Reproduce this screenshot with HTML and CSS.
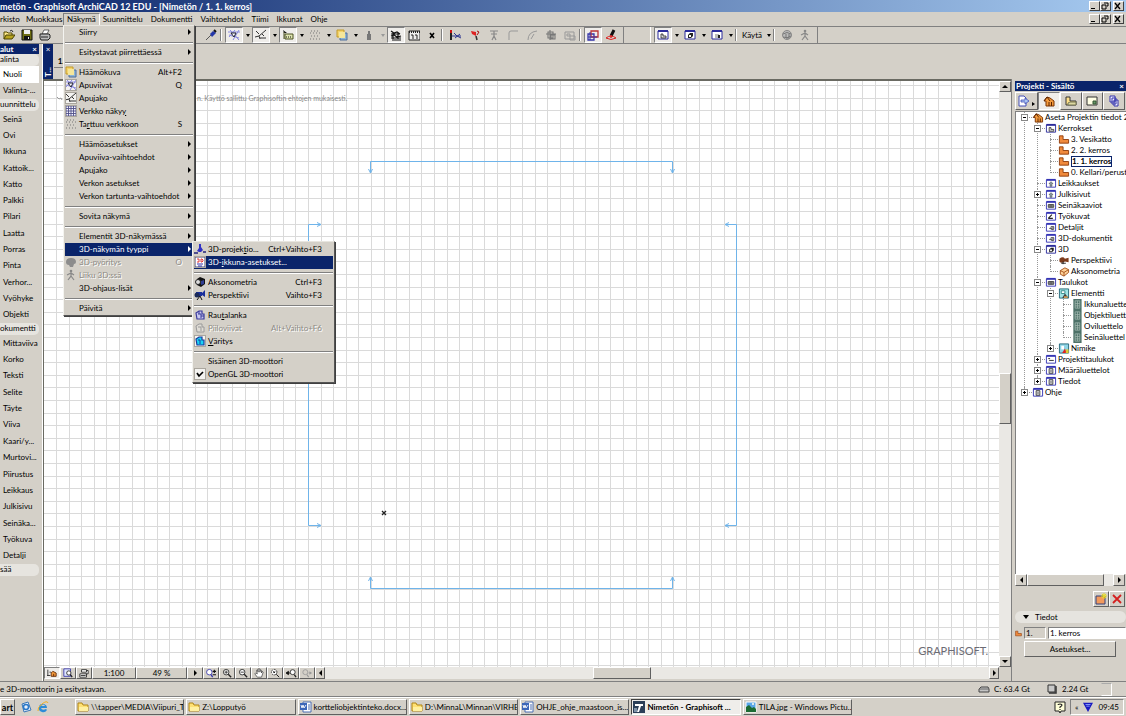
FILE: index.html
```html
<!DOCTYPE html>
<html lang="fi">
<head>
    <meta charset="UTF-8" />
    <title>Nimetön - Graphisoft ArchiCAD 12 EDU</title>
    <link rel="stylesheet" href="styles.css">
</head>
<body>
    <!-- Shared icons -->
    <svg class="sprite" aria-hidden="true">
        <symbol id="open" viewBox="0 0 12 12"><path d="M1 10V3h3l1 1h4v2" fill="#ffe98a" stroke="#554a00"/><path d="M1 10l2-4h9l-3 4z" fill="#b9a520" stroke="#4a4200"/><path d="M7 2q2-2 3 1" fill="none" stroke="#222"/></symbol>
        <symbol id="save" viewBox="0 0 12 12"><path d="M1 1h10v10H1z" fill="#6c6c10" stroke="#111"/><path d="M3 1h6v4H3z" fill="#eee"/><path d="M3 7h6v4H3z" fill="#111"/><path d="M7 8h1v2H7z" fill="#eee"/></symbol>
        <symbol id="print" viewBox="0 0 12 12"><path d="M3 5l2-4h5L8 5z" fill="#fff" stroke="#333" stroke-width=".7"/><path d="M1 5h9l1 1v3l-2 2H2L1 9z" fill="#bbb" stroke="#222"/><path d="M2 8h7" stroke="#222"/></symbol>
        <symbol id="pen" viewBox="0 0 12 12"><path d="M1 11l5-5" stroke="#555"/><path d="M5 5l3-3 3 2-4 4z" fill="#2437a8"/><path d="M9 1l2 2" stroke="#111" stroke-width="2"/></symbol>
        <symbol id="guide" viewBox="0 0 12 12"><path d="M0 3h12M2 1l9 10M11 1L5 11M1 6l10 3M1 8l6-7" stroke="#8a8ae0" fill="none"/><path d="M3 4h5L6 8z" fill="#fff" stroke="#223"/></symbol>
        <symbol id="split" viewBox="0 0 12 12"><path d="M0 8l4-1 7-6M1 2l3 3M5 9h6M7 5l2 2M4 7l1 3" fill="none" stroke="#333"/></symbol>
        <symbol id="coord" viewBox="0 0 12 12"><path d="M1 1l4 3H2z" fill="#111"/><path d="M2 3v7M3 5h8v5H3z" fill="#dfe5b0" stroke="#4a5020"/><path d="M4 8h6" stroke="#111" stroke-dasharray="1 1"/></symbol>
        <symbol id="dots" viewBox="0 0 12 12"><path d="M2 2h9M1 4h10M2 7h9M1 10h10" stroke="#777" stroke-dasharray="1 2"/></symbol>
        <symbol id="ghost" viewBox="0 0 12 12"><path d="M1 1h7v7H1z" fill="#f4d36a" stroke="#c29a28"/><path d="M4 4h7v7H4z" fill="#8eb4d4" stroke="#4e6f9c"/><path d="M3 3h6v6H3z" fill="#f5e69a"/></symbol>
        <symbol id="weight" viewBox="0 0 12 12"><path d="M4 5h4v6H4zM5 2h2v3H5z" fill="#777"/></symbol>
        <symbol id="trace" viewBox="0 0 12 12"><path d="M1 2l3 2 3-1 3 2M1 5h9M1 7l3-1 3 2 4-1M1 9h10M2 11h9M3 3v7M8 4v6" fill="none" stroke="#111" stroke-width="1.2"/></symbol>
        <symbol id="film" viewBox="0 0 12 12"><path d="M1 2h11v9H1z" fill="#eee" stroke="#222"/><path d="M1 3h11" stroke="#222" stroke-dasharray="1 1" stroke-width="2"/><path d="M3 6h2v4M7 6h2v4" fill="none" stroke="#222"/></symbol>
        <symbol id="cross" viewBox="0 0 12 12"><path d="M4 4l4 5M8 4L4 9" stroke="#000" stroke-width="1.6"/></symbol>
        <symbol id="cut" viewBox="0 0 12 12"><path d="M1 1v3" stroke="#c11" stroke-width="2"/><path d="M1 4v7" stroke="#222" stroke-width="2"/><path d="M2 7h9M4 4l3 3 4 2M5 9l5-4" fill="none" stroke="#2c3590"/></symbol>
        <symbol id="hammer" viewBox="0 0 12 12"><path d="M2 2l5 1v4L3 5z" fill="#d22"/><path d="M8 2l2 1-2 3" stroke="#a11" fill="none"/><path d="M7 7l1 4" stroke="#333" stroke-width="1.5"/></symbol>
        <symbol id="align" viewBox="0 0 12 12"><path d="M2 2h8M6 2v5M3 5h6M4 11l2-4 2 4" fill="none" stroke="#888" stroke-width="1.2"/></symbol>
        <symbol id="corner" viewBox="0 0 12 12"><path d="M2 11V4q0-2 2-2h7" fill="none" stroke="#999"/></symbol>
        <symbol id="arc" viewBox="0 0 12 12"><path d="M2 11q0-8 9-9M5 10l3-5" fill="none" stroke="#999"/></symbol>
        <symbol id="group" viewBox="0 0 12 12"><path d="M3 3h5v6H3zM5 1v10M1 5h10M6 6h4v4H6z" fill="none" stroke="#777" stroke-width="1.1"/></symbol>
        <symbol id="ungroup" viewBox="0 0 12 12"><path d="M1 3h9v7H1zM3 5h3v2H3zM6 7h5v4H6z" fill="none" stroke="#999"/></symbol>
        <symbol id="suspend" viewBox="0 0 12 12"><path d="M1 5h6v6H1z" fill="none" stroke="#3535a8" stroke-width="1.3"/><path d="M4 2h7v6H4z" fill="none" stroke="#b33" stroke-width="1.3"/><path d="M3 3v8M1 8h9" stroke="#3535a8"/></symbol>
        <symbol id="magic" viewBox="0 0 12 12"><path d="M9 1L6 7" stroke="#111" stroke-width="3"/><path d="M1 9q5-4 10 0-5 3-10 0z" fill="none" stroke="#d22"/><path d="M6 6v3" stroke="#d22" stroke-width="1.5"/></symbol>
        <symbol id="win" viewBox="0 0 12 12"><path d="M1 2h10v8H1z" fill="#fff" stroke="#2b2b9b"/><path d="M1 2h10" stroke="#2b2b9b" stroke-width="2"/><path d="M4 9V5h2v2h3v2z" fill="#ddd" stroke="#222" stroke-width=".8"/></symbol>
        <symbol id="win3d" viewBox="0 0 12 12"><path d="M1 2h10v8H1z" fill="#fff" stroke="#2b2b9b"/><path d="M1 2h10" stroke="#2b2b9b" stroke-width="2"/><path d="M4 6l2-2h3v3L7 9H4z" fill="#222"/><path d="M5 6h2v2H5z" fill="#fff"/></symbol>
        <symbol id="winlay" viewBox="0 0 12 12"><path d="M1 2h10v8H1z" fill="#fff" stroke="#2b2b9b"/><path d="M1 2h10" stroke="#2b2b9b" stroke-width="2"/><path d="M4 5h4v4H4z" fill="#bbb"/><path d="M7 6h2v3H7z" fill="#222"/></symbol>
        <symbol id="winstar" viewBox="0 0 12 12"><path d="M1 2h10v8H1z" fill="#fff" stroke="#3434b4"/><path d="M1 2h10" stroke="#3434b4" stroke-width="2"/><path d="M6 4l2 2H7v3H5V6H4z" fill="#9ab" stroke="#333" stroke-width=".6"/></symbol>
        <symbol id="wintab" viewBox="0 0 12 12"><path d="M1 2h10v8H1z" fill="#fff" stroke="#3434b4"/><path d="M1 2h10" stroke="#3434b4" stroke-width="2"/><path d="M3 5h6v3H3zM5 5v3M7 5v3" fill="#aaa" stroke="#222" stroke-width=".8"/></symbol>
        <symbol id="winpage" viewBox="0 0 12 12"><path d="M1 2h10v8H1z" fill="#fff" stroke="#3434b4"/><path d="M1 2h10" stroke="#3434b4" stroke-width="2"/><path d="M4 4h4v5H4zM6 5v3" fill="none" stroke="#222" stroke-width=".9"/></symbol>
        <symbol id="winpen" viewBox="0 0 12 12"><path d="M1 2h10v8H1z" fill="#fff" stroke="#3434b4"/><path d="M1 2h10" stroke="#3434b4" stroke-width="2"/><path d="M3 8l4-4M3 8h5" stroke="#222" stroke-width="1.2"/></symbol>
        <symbol id="windet" viewBox="0 0 12 12"><path d="M1 2h10v8H1z" fill="#fff" stroke="#3434b4"/><path d="M1 2h10" stroke="#3434b4" stroke-width="2"/><path d="M8 5v4M4 7h3M6 5h3v3H6z" stroke="#333" fill="none" stroke-width=".8"/></symbol>
        <symbol id="winlist" viewBox="0 0 12 12"><path d="M1 2h10v8H1z" fill="#fff" stroke="#3434b4"/><path d="M1 2h10" stroke="#3434b4" stroke-width="2"/><path d="M3 5h2M4 7h5" stroke="#222"/></symbol>
        <symbol id="orbit" viewBox="0 0 12 12"><path d="M1 6q0-4 5-4t5 4q0 2-2 2l-1 3H5L4 9Q1 9 1 6z" fill="#8c8c8c"/></symbol>
        <symbol id="globe" viewBox="0 0 12 12"><circle cx="6" cy="6" r="4.5" fill="#bbb" stroke="#888"/><path d="M2 5q4-3 8 0M2 8q4 2 8-1M5 5v4h3V5" fill="none" stroke="#777"/></symbol>
        <symbol id="walk" viewBox="0 0 12 12"><circle cx="6" cy="2" r="1.3" fill="#888"/><path d="M6 3v4l-3 4M6 7l3 4M2 6l4-2 3 2" fill="none" stroke="#888" stroke-width="1.2"/></symbol>
        <symbol id="grid" viewBox="0 0 12 12"><path d="M0 0h12v12H0z" fill="#f4f4ff"/><path d="M1 0v12M3.500 0v12M6 0v12M8.500 0v12M11 0v12M0 1h12M0 3.500h12M0 6h12M0 8.500h12M0 11h12" stroke="#4e4e88" stroke-width=".9"/></symbol>
        <symbol id="proj" viewBox="0 0 12 12"><path d="M5 1h2v3l2 3-2 2H5L3 8l2-3z" fill="#3131c4"/><path d="M0 10h4M9 9h3" stroke="#22227a" stroke-width="1.6"/></symbol>
        <symbol id="set3d" viewBox="0 0 12 12"><path d="M1 1h10v10H1z" fill="#fff" stroke="#447"/><path d="M3 3h2v3H3M7 3h1l1 1v1L8 6H7z" fill="none" stroke="#d22" stroke-width=".9"/><path d="M3 8h6M4 10h4" stroke="#33a"/></symbol>
        <symbol id="axo" viewBox="0 0 12 12"><path d="M3 3l3-2 5 2v5l-4 3-4-2z" fill="#111"/><circle cx="4" cy="6" r="2.500" fill="#ddd" stroke="#222"/><path d="M7 5l3-1v4L7 9z" fill="#2f3d94"/></symbol>
        <symbol id="camera" viewBox="0 0 12 12"><path d="M2 3h6v4H2zM8 4l3-3v7L8 6z" fill="#1a2f9c"/><circle cx="3" cy="6" r="2.500" fill="#1b2a58"/><path d="M6 7l-3 4M6 7l2 4" stroke="#111"/></symbol>
        <symbol id="wire" viewBox="0 0 12 12"><path d="M2 4l3-2h3v3h2v5H3z" fill="#c8c8ee" stroke="#3a3a9c" stroke-width="1.2"/><path d="M4 5h3v4M7 7h3M5 2v3" fill="none" stroke="#3a3a9c"/></symbol>
        <symbol id="hidden" viewBox="0 0 12 12"><path d="M2 4l3-2h3v3h2v5H3zM4 5h3v4" fill="#e0ddd6" stroke="#999"/></symbol>
        <symbol id="shade" viewBox="0 0 12 12"><path d="M2 4l3-2h3v3h2v5H3z" fill="#19d3f5" stroke="#1b3a9c" stroke-width="1.2"/><path d="M4 5h2v4" fill="none" stroke="#1b3a9c"/></symbol>
        <symbol id="check" viewBox="0 0 12 12"><path d="M3 5l2 3 4-4" fill="none" stroke="#000" stroke-width="1.7"/></symbol>
        <symbol id="house" viewBox="0 0 12 12"><path d="M1 6l3-4 3 1 4 3v5H3V6z" fill="#f39a3c" stroke="#7a3200"/><path d="M6 7v4M8.500 7v4M1 6l3-4 3 4" stroke="#5a2200" fill="none"/></symbol>
        <symbol id="storey" viewBox="0 0 12 12"><path d="M1 2h4v4h6v4H1z" fill="#f08a3c" stroke="#8e3c0c"/></symbol>
        <symbol id="viewmap" viewBox="0 0 12 12"><path d="M1 2h4v4h6v4H1z" fill="#ffe08a" stroke="#333"/><path d="M5 7h6v3H3V8z" fill="#dcd8a0" stroke="#775"/></symbol>
        <symbol id="layout" viewBox="0 0 12 12"><path d="M1 2h10v8H1z" fill="#ffffe4" stroke="#333"/><path d="M7 6h3v3H7z" fill="#696" stroke="#353"/></symbol>
        <symbol id="pubset" viewBox="0 0 12 12"><path d="M2 1h5v6H2zM4 3h4v6H4zM6 5h4v6H6z" fill="#eef" stroke="#33a"/></symbol>
        <symbol id="chooser" viewBox="0 0 12 12"><path d="M1 1h5l2 2v8H1z" fill="#fff" stroke="#4450b8"/><path d="M3 5h4V3l4 3-4 3V7H3z" fill="#a9c4f4" stroke="#4450b8" stroke-width=".8"/></symbol>
        <symbol id="movie" viewBox="0 0 12 12"><path d="M1 4q4-3 6 0l4-1v5L7 7q-4 3-6 0z" fill="#7c3b1c"/><path d="M3 9h5M5 7v3" stroke="#222"/></symbol>
        <symbol id="axobox" viewBox="0 0 12 12"><path d="M2 5l5-3 4 2v3l-5 4-4-2z" fill="#ffd39a" stroke="#a4511a"/><path d="M2 5l4 2 5-3M6 7v4" fill="none" stroke="#a4511a"/></symbol>
        <symbol id="element" viewBox="0 0 12 12"><path d="M1 1h10v10H1z" fill="#9fe4e6" stroke="#267"/><path d="M3 3h4v3H3z" fill="#fff" stroke="#388"/><path d="M4 11l3-5 4 5z" fill="#444"/><path d="M6 9h4v2H6z" fill="#c95"/></symbol>
        <symbol id="component" viewBox="0 0 12 12"><path d="M1 1h10v10H1z" fill="#8fd4e6" stroke="#267"/><path d="M3 3h3v4H3z" fill="#fff"/><path d="M4 11l3-5 2 5z" fill="#d22"/><path d="M8 7h3v4H8z" fill="#dc3"/></symbol>
        <symbol id="sched" viewBox="0 0 12 12"><path d="M2 0h9v12H2z" fill="#4d7168"/><path d="M4 2h5v8H4zM4 5h5M4 7.500h5M6.500 2v8" fill="none" stroke="#a7bcb4" stroke-width=".8"/></symbol>
        <symbol id="magfit" viewBox="0 0 12 12"><circle cx="5" cy="5" r="3.300" fill="#fff" stroke="#222" stroke-dasharray="2 1"/><path d="M7.500 7.500L11 11M4 4l2 2M6 4L4 6" stroke="#222" stroke-width="1.200"/></symbol>
        <symbol id="magplus" viewBox="0 0 12 12"><circle cx="5" cy="5" r="3.300" fill="#fff" stroke="#222"/><path d="M7.500 7.500L11 11" stroke="#222" stroke-width="1.600"/><path d="M3 5h4M5 3v4" stroke="#222"/></symbol>
        <symbol id="magminus" viewBox="0 0 12 12"><circle cx="5" cy="5" r="3.300" fill="#fff" stroke="#222"/><path d="M7.500 7.500L11 11" stroke="#222" stroke-width="1.600"/><path d="M3 5h4" stroke="#222"/></symbol>
        <symbol id="magpm" viewBox="0 0 12 12"><circle cx="4" cy="5" r="3.300" fill="#fff" stroke="#33a"/><path d="M6 8l2 3" stroke="#33a" stroke-width="1.600"/><path d="M8 4h4M10 2v4M8 8h4" stroke="#111" stroke-width="1.300"/></symbol>
        <symbol id="magprev" viewBox="0 0 12 12"><circle cx="8" cy="5" r="3" fill="#fff" stroke="#222"/><path d="M10 8l2 3" stroke="#222" stroke-width="1.600"/><path d="M0 6l3-2v4zM2 6h3" stroke="#111" fill="#111"/></symbol>
        <symbol id="magnext" viewBox="0 0 12 12"><circle cx="4" cy="5" r="3" fill="none" stroke="#999"/><path d="M6 8l2 3M8 6h3" stroke="#999" stroke-width="1.400"/><path d="M12 6L9 4v4z" fill="#999"/></symbol>
        <symbol id="hand" viewBox="0 0 12 12"><path d="M4 11L1 7l1-1 2 1-1-4 1-1 1 3V1h2v4l1-3 1 1v3l1-2 1 1-2 6z" fill="#fff" stroke="#333" stroke-width=".8"/></symbol>
        <symbol id="nav" viewBox="0 0 12 12"><path d="M1 2v7M0 9h4M3 5h2" stroke="#222"/><path d="M5 6l2-2 4 2v4H5z" fill="#f39a3c" stroke="#5a2200"/><path d="M8 7v3" stroke="#5a2200"/></symbol>
        <symbol id="magpage" viewBox="0 0 12 12"><path d="M1 1h8v9H1z" fill="#dfe6ff" stroke="#33a"/><circle cx="7" cy="6" r="2.600" fill="#fff" stroke="#222"/><path d="M9 8l2 3" stroke="#222" stroke-width="1.500"/></symbol>
        <symbol id="orient" viewBox="0 0 12 12"><path d="M3 2h6v3H3zM1 7h8v4H1zM9 3h2v4H8" fill="#fff" stroke="#222"/><path d="M2 9h6" stroke="#222"/></symbol>
        <symbol id="newstorey" viewBox="0 0 12 12"><path d="M1 3h9v8H1z" fill="#f39a5c" stroke="#33407c"/><path d="M9 0v6M6 3h6M7 1l4 4M11 1L7 5" stroke="#e6dc20"/></symbol>
        <symbol id="delete" viewBox="0 0 12 12"><path d="M2 2l8 8M10 2L2 10" stroke="#d42020" stroke-width="1.800"/></symbol>
        <symbol id="drive" viewBox="0 0 12 12"><path d="M1 6l2-2h7l1 2v3H1z" fill="#c4c4c4" stroke="#444"/><path d="M1 6h10" stroke="#666"/></symbol>
        <symbol id="chip" viewBox="0 0 12 12"><path d="M2 2h7v7H2z" fill="#c8c8c8" stroke="#333"/><path d="M3 10h7V3" fill="none" stroke="#333" stroke-width="1.500"/></symbol>
        <symbol id="folder" viewBox="0 0 12 12"><path d="M1 2h4l1 2h5v6H1z" fill="#ffe173" stroke="#b08414"/><path d="M2 6h9v4H2z" fill="#fff0a0"/></symbol>
        <symbol id="word" viewBox="0 0 12 12"><path d="M3 1h8v10H3z" fill="#fff" stroke="#4a6cb0"/><path d="M0 2h7v7H0z" fill="#3c66b8"/><path d="M1 4l1 3 1-3 1 3 2-3" fill="none" stroke="#fff" stroke-width=".9"/><path d="M8 4h2M8 6h2M8 8h2" stroke="#4a6cb0"/></symbol>
        <symbol id="archicad" viewBox="0 0 12 12"><path d="M0 0h12v12H0z" fill="#2b3f58"/><path d="M2 3h8v2H8L6 11H4l2-6H2z" fill="#fff"/><path d="M1 7h3v4H1z" fill="#7f93a8"/></symbol>
        <symbol id="photo" viewBox="0 0 12 12"><path d="M1 1h10v10H1z" fill="#5aa6e8" stroke="#fff"/><path d="M1 11V6l3-2 3 3 2-1 2 2v3z" fill="#1d6c34"/><circle cx="8" cy="3" r="1" fill="#ffe"/></symbol>
        <symbol id="outlook" viewBox="0 0 12 12"><path d="M2 3l6-2 3 8-7 2z" fill="#e7f0fb" stroke="#3b78b8"/><circle cx="6" cy="6" r="2.500" fill="none" stroke="#2b78c8" stroke-width="1.500"/></symbol>
        <symbol id="ie" viewBox="0 0 12 12"><path d="M10 7H4q1 3 5 1l1 1q-2 3-5 2-4-1-3-5t5-3q3 1 3 4zM4 5h4q-1-2-2-1.500T4 5z" fill="#2b8cd8"/><path d="M1 10q-1-3 4-7t6-1" fill="none" stroke="#f0b020"/></symbol>
        <symbol id="help" viewBox="0 0 12 12"><path d="M1 1h10v9H7l-1 2-1-2H1z" fill="#ffffd8" stroke="#222"/><path d="M4 4q0-1 2-1t2 1-2 2v1M6 8v1" fill="none" stroke="#222" stroke-width="1.200"/></symbol>
        <symbol id="shield" viewBox="0 0 12 12"><path d="M0 1h12L6 12z" fill="#1818c0"/><path d="M3 3h6M4 5h4" stroke="#9ab0ff"/></symbol>
    </svg>

    <header>
        <div class="titlebar">
            <h1>metön - Graphisoft ArchiCAD 12 EDU - [Nimetön / 1. 1. kerros]</h1>
            <div class="controls">
                <button aria-label="Pienennä"><svg viewBox="0 0 8 8"><path d="M1 6h4v1H1z"/></svg></button><button aria-label="Palauta"><svg viewBox="0 0 8 8"><path d="M3 1h4v3H6M1 3h4v4H1z" fill="none" stroke="#000"/></svg></button><button class="close" aria-label="Sulje"><svg viewBox="0 0 8 8"><path d="M1 1l5 6M6 1L1 7" stroke="#000" stroke-width="1.300"/></svg></button>
            </div>
        </div>
        <nav class="menubar">
            <button class="m-file">rkisto</button>
            <button class="m-edit">Muokkaus</button>
            <div class="menu-holder">
                <button class="m-view">Näkymä</button>
                <ul class="menu">
                    <li><button><span></span>Siirry<i></i></button></li>
                    <li class="sep"></li>
                    <li><button><span></span>Esitystavat piirrettäessä<i></i></button></li>
                    <li class="sep"></li>
                    <li><button><svg><use href="#ghost"/></svg>Häämökuva<kbd>Alt+F2</kbd></button></li>
                    <li><button><svg class="on"><use href="#guide"/></svg>Apuviivat<kbd>Q</kbd></button></li>
                    <li><button><svg class="on"><use href="#split"/></svg>Apujako</button></li>
                    <li><button><svg class="on"><use href="#grid"/></svg>Verkko näky<u>y</u></button></li>
                    <li><button><svg><use href="#dots"/></svg>Ta<u>r</u>ttuu verkkoon<kbd>S</kbd></button></li>
                    <li class="sep"></li>
                    <li><button><span></span>Häämöasetukset<i></i></button></li>
                    <li><button><span></span>Apuviiva-vaihtoehdot<i></i></button></li>
                    <li><button><span></span>Apujako<i></i></button></li>
                    <li><button><span></span>Verkon asetukset<i></i></button></li>
                    <li><button><span></span>Verkon tartunta-vaihtoehdot<i></i></button></li>
                    <li class="sep"></li>
                    <li><button><span></span>Sovita näkymä<i></i></button></li>
                    <li class="sep"></li>
                    <li><button><span></span>Elementit 3D-näkymässä<i></i></button></li>
                    <li class="has-sub">
                        <button class="active"><span></span>3D-näkymän tyyppi<i></i></button>
                        <ul class="menu submenu">
                            <li><button><svg><use href="#proj"/></svg>3D-projek<u>t</u>io...<kbd>Ctrl+Vaihto+F3</kbd></button></li>
                            <li><button class="active"><svg class="on"><use href="#set3d"/></svg>3D-<u>i</u>kkuna-asetukset...</button></li>
                            <li class="sep"></li>
                            <li><button><svg><use href="#axo"/></svg>Aksonometria<kbd>Ctrl+F3</kbd></button></li>
                            <li><button><svg><use href="#camera"/></svg>Perspektiivi<kbd>Vaihto+F3</kbd></button></li>
                            <li class="sep"></li>
                            <li><button><svg><use href="#wire"/></svg>Rau<u>t</u>alanka</button></li>
                            <li><button disabled><svg><use href="#hidden"/></svg>Piiloviivat<kbd>Alt+Vaihto+F6</kbd></button></li>
                            <li><button><svg class="on"><use href="#shade"/></svg><u>V</u>äritys</button></li>
                            <li class="sep"></li>
                            <li><button><span></span>Sisäinen 3D-moottori</button></li>
                            <li><button><svg class="on"><use href="#check"/></svg>OpenGL 3D-moottori</button></li>
                        </ul>
                    </li>
                    <li><button disabled><svg><use href="#orbit"/></svg>3D-pyöritys<kbd>O</kbd></button></li>
                    <li><button disabled><svg><use href="#walk"/></svg>Liiku 3D:ssä</button></li>
                    <li><button><span></span>3D-ohjaus-lisät<i></i></button></li>
                    <li class="sep"></li>
                    <li><button><span></span>Päivitä<i></i></button></li>
                </ul>
            </div>
            <button>Suunnittelu</button>
            <button>Dokumentti</button>
            <button>Vaihtoehdot</button>
            <button>Tiimi</button>
            <button>Ikkunat</button>
            <button>Ohje</button>
            <div class="controls">
                <button aria-label="Pienennä ikkuna"><svg viewBox="0 0 8 8"><path d="M1 6h4v1H1z"/></svg></button><button aria-label="Palauta ikkuna"><svg viewBox="0 0 8 8"><path d="M3 1h4v3H6M1 3h4v4H1z" fill="none" stroke="#000"/></svg></button><button class="close" aria-label="Sulje ikkuna"><svg viewBox="0 0 8 8"><path d="M1 1l5 6M6 1L1 7" stroke="#000" stroke-width="1.300"/></svg></button>
            </div>
        </nav>
        <div class="toolbar">
            <div class="file-tools">
                <button aria-label="Avaa"><svg><use href="#open"/></svg></button>
                <button aria-label="Tallenna"><svg><use href="#save"/></svg></button>
                <button aria-label="Tulosta"><svg><use href="#print"/></svg></button>
            </div>
            <div class="tools">
                <button aria-label="Poimi"><svg><use href="#pen"/></svg></button>
                <span class="bar"></span>
                <button class="on" aria-label="Apuviivat"><svg><use href="#guide"/></svg></button><button class="drop" aria-label="Apuviivavalinnat"></button>
                <button class="on" aria-label="Apujako"><svg><use href="#split"/></svg></button><button class="drop" aria-label="Apujakovalinnat"></button>
                <button class="on" aria-label="Koordinaatit"><svg><use href="#coord"/></svg></button><button class="drop" aria-label="Koordinaattivalinnat"></button>
                <button aria-label="Verkko"><svg><use href="#dots"/></svg></button><button class="drop" aria-label="Verkkovalinnat"></button>
                <button aria-label="Häämökuva"><svg><use href="#ghost"/></svg></button><button class="drop" aria-label="Häämövalinnat"></button>
                <button aria-label="Painovoima"><svg><use href="#weight"/></svg></button><button class="drop dim" aria-label="Painovoimavalinnat"></button>
                <button class="on" aria-label="Seuranta"><svg><use href="#trace"/></svg></button>
                <button aria-label="Mitat"><svg><use href="#film"/></svg></button>
                <button aria-label="Poista mitat"><svg><use href="#cross"/></svg></button>
                <span class="bar"></span>
                <button class="wide" aria-label="Leikkaa"><svg><use href="#cut"/></svg></button>
                <button class="wide" aria-label="Katkaise"><svg><use href="#hammer"/></svg></button>
                <button class="wide" aria-label="Tasaa"><svg><use href="#align"/></svg></button>
                <button class="wide" aria-label="Kulma"><svg><use href="#corner"/></svg></button>
                <button class="wide" aria-label="Pyöristä"><svg><use href="#arc"/></svg></button>
                <button class="wide" aria-label="Ryhmitä"><svg><use href="#group"/></svg></button>
                <button class="wide" aria-label="Pura ryhmä"><svg><use href="#ungroup"/></svg></button>
                <span class="bar"></span>
                <button class="on" aria-label="Ryhmälukko"><svg><use href="#suspend"/></svg></button>
                <button aria-label="Taikasauva"><svg><use href="#magic"/></svg></button>
            </div>
            <div class="tools views">
                <button class="on" aria-label="Pohja"><svg><use href="#win"/></svg></button><button class="drop" aria-label="Pohjavalinnat"></button>
                <button aria-label="3D-ikkuna"><svg><use href="#win3d"/></svg></button><button class="drop" aria-label="3D-valinnat"></button>
                <button aria-label="Planssi"><svg><use href="#winlay"/></svg></button><button class="drop" aria-label="Planssivalinnat"></button>
                <span class="bar"></span>
                <button class="label">Käytä</button><button class="drop" aria-label="Käyttövalinnat"></button>
                <span class="bar"></span>
                <button aria-label="Pyöritä"><svg><use href="#globe"/></svg></button>
                <button aria-label="Kävele"><svg><use href="#walk"/></svg></button>
            </div>
        </div>
    </header>

    <main>
        <aside class="toolbox">
            <h2>alut<span>×</span></h2>
            <h3>alinta</h3>
            <ul class="few">
                <li><button class="picked">Nuoli</button></li>
                <li><button>Valinta-...</button></li>
            </ul>
            <h3>uunnittelu</h3>
            <ul class="design">
                <li><button>Seinä</button></li>
                <li><button>Ovi</button></li>
                <li><button>Ikkuna</button></li>
                <li><button>Kattoik...</button></li>
                <li><button>Katto</button></li>
                <li><button>Palkki</button></li>
                <li><button>Pilari</button></li>
                <li><button>Laatta</button></li>
                <li><button>Porras</button></li>
                <li><button>Pinta</button></li>
                <li><button>Verhor...</button></li>
                <li><button>Vyöhyke</button></li>
                <li><button>Objekti</button></li>
            </ul>
            <h3>okumentti</h3>
            <ul class="document">
                <li><button>Mittaviiva</button></li>
                <li><button>Korko</button></li>
                <li><button>Teksti</button></li>
                <li><button>Selite</button></li>
                <li><button>Täyte</button></li>
                <li><button>Viiva</button></li>
                <li><button>Kaari/y...</button></li>
                <li><button>Murtovi...</button></li>
                <li><button>Piirustus</button></li>
                <li><button>Leikkaus</button></li>
                <li><button>Julkisivu</button></li>
                <li><button>Seinäka...</button></li>
                <li><button>Työkuva</button></li>
                <li><button>Detalji</button></li>
            </ul>
            <h3>sää</h3>
        </aside>

        <div class="work">
            <div class="infobox">
                <div class="grip"><span>×</span><b>T...</b></div>
                <button>1.</button>
            </div>
            <div class="split">
                <section class="document-window">
                    <div class="view">
                        <div class="canvas">
                            <svg class="drawing">
                                <defs>
                                    <pattern id="mesh" x="12" y="4" width="63" height="63" patternUnits="userSpaceOnUse">
                                        <path d="M0 0h1v63H0zM13 0h1v63h-1zM25 0h1v63h-1zM38 0h1v63h-1zM50 0h1v63h-1zM0 0h63v1H0zM0 13h63v1H0zM0 25h63v1H0zM0 38h63v1H0zM0 50h63v1H0z" fill="#dadada"/>
                                    </pattern>
                                </defs>
                                <rect width="100%" height="100%" fill="url(#mesh)"/>
                                <path d="M13 16l2 2 2-1 1 2" fill="none" stroke="#999"/>
                                <text x="153" y="20">n. Käyttö sallittu Graphisoftin ehtojen mukaisesti.</text>
                                <g fill="none" stroke="#6fb4ea">
                                    <path d="M326.500 92V80.500H628.500V92M324.500 88l2 4 2-4M626.500 88l2 4 2-4"/>
                                    <path d="M277 143.500H264.500V444.500H277M273 141.500l4 2-4 2M273 442.500l4 2-4 2"/>
                                    <path d="M681 143.500H692.500V444.500H681M685 141.500l-4 2 4 2M685 442.500l-4 2 4 2"/>
                                    <path d="M326.500 496V507.500H628.500V496M324.500 500l2-4 2 4M626.500 500l2-4 2 4"/>
                                </g>
                                <path d="M338 430l4 4M342 430l-4 4" stroke="#222" stroke-width="1.300"/>
                            </svg>
                            <span class="brand">GRAPHISOFT.</span>
                        </div>
                        <div class="vscroll">
                            <button class="up" aria-label="Ylös"></button>
                            <div class="track"><div class="thumb"></div></div>
                            <button class="down" aria-label="Alas"></button>
                        </div>
                    </div>
                    <div class="zoombar">
                        <button class="on" aria-label="Navigaattori"><svg><use href="#nav"/></svg></button>
                        <button aria-label="Esikatselu"><svg><use href="#magpage"/></svg></button>
                        <button aria-label="Suunta"><svg><use href="#orient"/></svg></button>
                        <button class="scale">1:100</button>
                        <button class="percent">49 %</button>
                        <button class="right" aria-label="Zoomaukset"></button>
                        <button aria-label="Zoom"><svg><use href="#magpm"/></svg></button>
                        <button aria-label="Suurenna"><svg><use href="#magplus"/></svg></button>
                        <button aria-label="Pienennä kuvaa"><svg><use href="#magminus"/></svg></button>
                        <button aria-label="Panoroi"><svg><use href="#hand"/></svg></button>
                        <button aria-label="Sovita ikkunaan"><svg><use href="#magfit"/></svg></button>
                        <button aria-label="Edellinen"><svg><use href="#magprev"/></svg></button>
                        <button disabled aria-label="Seuraava"><svg><use href="#magnext"/></svg></button>
                        <button class="left" aria-label="Vasemmalle"></button>
                        <div class="track"><div class="thumb"></div></div>
                        <button class="right" aria-label="Oikealle"></button>
                        <span class="corner"></span>
                    </div>
                </section>

                <aside class="navigator">
                    <h2>Projekti - Sisältö<span>×</span></h2>
                    <div class="maps">
                        <button aria-label="Valitse projekti"><svg><use href="#chooser"/></svg><i></i></button>
                        <button class="on" aria-label="Projekti"><svg><use href="#house"/></svg></button>
                        <button aria-label="Näkymät"><svg><use href="#viewmap"/></svg></button>
                        <button aria-label="Planssikirja"><svg><use href="#layout"/></svg></button>
                        <button aria-label="Julkaisut"><svg><use href="#pubset"/></svg></button>
                    </div>
                    <div class="tree">
                        <ul>
                            <li><b class="minus"></b><svg><use href="#house"/></svg>Aseta Projektin tiedot 2
                                <ul>
                                    <li><b class="minus"></b><svg><use href="#win"/></svg>Kerrokset
                                        <ul>
                                            <li><svg><use href="#storey"/></svg>3. Vesikatto</li>
                                            <li><svg><use href="#storey"/></svg>2. 2. kerros</li>
                                            <li><svg><use href="#storey"/></svg><strong>1. 1. kerros</strong></li>
                                            <li><svg><use href="#storey"/></svg>0. Kellari/perust</li>
                                        </ul>
                                    </li>
                                    <li><svg><use href="#winstar"/></svg>Leikkaukset</li>
                                    <li><b class="plus"></b><svg><use href="#winstar"/></svg>Julkisivut</li>
                                    <li><svg><use href="#wintab"/></svg>Seinäkaaviot</li>
                                    <li><svg><use href="#winpen"/></svg>Työkuvat</li>
                                    <li><svg><use href="#windet"/></svg>Detaljit</li>
                                    <li><svg><use href="#windet"/></svg>3D-dokumentit</li>
                                    <li><b class="minus"></b><svg><use href="#win3d"/></svg>3D
                                        <ul>
                                            <li><svg><use href="#movie"/></svg>Perspektiivi</li>
                                            <li><svg><use href="#axobox"/></svg>Aksonometria</li>
                                        </ul>
                                    </li>
                                    <li><b class="minus"></b><svg><use href="#wintab"/></svg>Taulukot
                                        <ul>
                                            <li><b class="minus"></b><svg><use href="#element"/></svg>Elementti
                                                <ul>
                                                    <li><svg><use href="#sched"/></svg>Ikkunaluette</li>
                                                    <li><svg><use href="#sched"/></svg>Objektiluett</li>
                                                    <li><svg><use href="#sched"/></svg>Oviluettelo</li>
                                                    <li><svg><use href="#sched"/></svg>Seinäluettel</li>
                                                </ul>
                                            </li>
                                            <li><b class="plus"></b><svg><use href="#component"/></svg>Nimike</li>
                                        </ul>
                                    </li>
                                    <li><b class="plus"></b><svg><use href="#winlist"/></svg>Projektitaulukot</li>
                                    <li><b class="plus"></b><svg><use href="#winpage"/></svg>Määräluettelot</li>
                                    <li><b class="plus"></b><svg><use href="#winpage"/></svg>Tiedot</li>
                                </ul>
                            </li>
                            <li><b class="plus"></b><svg><use href="#winpage"/></svg>Ohje</li>
                        </ul>
                    </div>
                    <div class="hscroll">
                        <button class="left" aria-label="Puu vasemmalle"></button>
                        <div class="track"><div class="thumb"></div></div>
                        <button class="right" aria-label="Puu oikealle"></button>
                    </div>
                    <div class="actions">
                        <button aria-label="Uusi kerros"><svg><use href="#newstorey"/></svg></button>
                        <button aria-label="Poista"><svg><use href="#delete"/></svg></button>
                    </div>
                    <h3>Tiedot</h3>
                    <div class="props">
                        <svg><use href="#storey"/></svg>
                        <input class="id" aria-label="Numero" value="1." readonly>
                        <input class="name" aria-label="Nimi" value="1. kerros">
                    </div>
                    <button class="settings">Asetukset...</button>
                </aside>
            </div>
        </div>
    </main>

    <footer>
        <div class="status">
            <p>e 3D-moottorin ja esitystavan.</p>
            <span class="disk"><svg><use href="#drive"/></svg>C: 63.4 Gt</span>
            <span class="memory"><svg><use href="#chip"/></svg>2.24 Gt</span>
            <span class="slot"></span>
        </div>
        <div class="taskbar">
            <button class="start">art</button>
            <div class="quick">
                <button aria-label="Outlook"><svg><use href="#outlook"/></svg></button>
                <button aria-label="Internet Explorer"><svg><use href="#ie"/></svg></button>
            </div>
            <div class="tasks">
                <button><svg><use href="#folder"/></svg>\\tapper\MEDIA\Viipuri_T...</button>
                <button><svg><use href="#folder"/></svg>Z:\Lopputyö</button>
                <button><svg><use href="#word"/></svg>kortteliobjektinteko.docx...</button>
                <button><svg><use href="#folder"/></svg>D:\MinnaL\Minnan\VIRHE...</button>
                <button><svg><use href="#word"/></svg>OHJE_ohje_maastoon_is...</button>
                <button class="current"><svg><use href="#archicad"/></svg>Nimetön - Graphisoft ...</button>
                <button><svg><use href="#photo"/></svg>TILA.jpg - Windows Pictu...</button>
            </div>
            <svg class="help"><use href="#help"/></svg>
            <div class="tray">«<svg><use href="#shield"/></svg><time>09:45</time></div>
        </div>
    </footer>
</body>
</html>
```
FILE: styles.css
```css
* {
    box-sizing: border-box;
}
body {
    margin: 0;
    min-height: 100vh;
    display: flex;
    flex-direction: column;
    overflow: hidden;
    background: #d4d0c8;
    color: #000;
    font-family: Lato, "DejaVu Sans Condensed", sans-serif;
    font-size: 8px;
    line-height: 11px;
    white-space: nowrap;
}
h1, h2, h3, p, ul {
    margin: 0;
    padding: 0;
    font-size: 8px;
}
p {
    font-weight: normal;
}
ul {
    list-style: none;
}
button, input, kbd {
    font: inherit;
    color: inherit;
}
button {
    margin: 0;
    padding: 0;
    border: none;
    background: none;
}
svg {
    width: 12px;
    height: 12px;
    flex: none;
}
.sprite {
    position: absolute;
    width: 0;
    height: 0;
}

/* title bar and menus */
.titlebar {
    display: flex;
    align-items: center;
    height: 12px;
    background: linear-gradient(to right, #0a246a, #a6caf0);
    color: #fff;
}
h1 {
    font-size: 9px;
}
.controls {
    display: flex;
    margin-left: auto;
    padding-right: 2px;
}
.controls button {
    display: flex;
    width: 11px;
    height: 10px;
    background: #d4d0c8;
    border: 1px solid;
    border-color: #fff #404040 #404040 #fff;
}
.controls svg {
    width: 8px;
    height: 8px;
}
.controls .close {
    margin-left: 2px;
}
.menubar {
    display: flex;
    align-items: center;
    height: 14px;
}
.menubar > button {
    margin-right: 8px;
    text-align: left;
}
.menubar .m-file {
    width: 26px;
    margin-right: 0;
}
.menubar .m-edit {
    width: 37px;
    margin-right: 0;
}
.menu-holder {
    position: relative;
    margin-right: 3px;
}
.m-view {
    height: 13px;
    padding: 0 3px;
    border: 1px solid;
    border-color: #808080 #fff #d4d0c8 #808080;
}
.menu {
    position: absolute;
    z-index: 5;
    top: 12px;
    left: 0;
    width: 132px;
    padding: 0 1px;
    background: #d4d0c8;
    border: 1px solid;
    border-color: #e8e6e0 #555 #555 #f4f4f0;
    box-shadow: 1px 1px 0 #404040;
}
.menu button {
    display: flex;
    align-items: center;
    width: 100%;
    height: 13px;
    text-align: left;
    white-space: pre;
}
.menu button > svg, .menu button > span {
    width: 12px;
    height: 12px;
    margin-right: 2px;
}
.menu svg.on {
    background: #f4f3f0;
    outline: 1px solid #aaa69e;
    outline-offset: -1px;
}
.menu button kbd {
    margin-left: auto;
    margin-right: 11px;
}
.menu i {
    margin-left: auto;
    margin-right: 2px;
    border: 3px solid transparent;
    border-left-color: #000;
    border-right: none;
}
.menu .active {
    background: #0a246a;
    color: #fff;
}
.menu .active i {
    border-left-color: #fff;
}
.menu button:disabled {
    color: #8c8a84;
    text-shadow: 1px 1px 0 #fff;
}
.sep {
    height: 7px;
    padding-top: 3px;
}
.sep::before {
    content: "";
    display: block;
    border-top: 1px solid #808080;
    border-bottom: 1px solid #fff;
}
.has-sub {
    position: relative;
}
.submenu {
    top: -2px;
    left: 127px;
    width: 143px;
    padding: 1px;
}

/* toolbar */
.toolbar {
    display: flex;
    height: 18px;
    border-top: 1px solid #808080;
    border-bottom: 1px solid #808080;
}
.toolbar button, .toolbar > div {
    display: flex;
    align-items: center;
}
.toolbar button {
    justify-content: center;
    width: 18px;
    height: 16px;
}
.toolbar .wide {
    width: 19px;
}
.toolbar .label {
    width: 24px;
}
.toolbar .on, .maps .on, .zoombar .on {
    background: #efedea;
    border: 1px solid;
    border-color: #808080 #fff #fff #808080;
}
.toolbar .drop {
    width: 9px;
}
.drop::before {
    content: "";
    border: 2px solid transparent;
    border-top: 3px solid #000;
    border-bottom: none;
}
.dim::before {
    border-top-color: #999;
}
.bar {
    width: 5px;
    height: 12px;
    border-left: 1px solid #808080;
    box-shadow: inset 1px 0 0 #fff;
}
.file-tools {
    width: 202px;
}
.tools {
    padding-right: 3px;
    border-right: 1px solid #808080;
}
.views {
    margin-left: 26px;
    padding-left: 3px;
    border-left: 1px solid #fff;
}

/* main area */
main {
    flex: 1;
    display: flex;
}
h2 {
    display: flex;
    justify-content: space-between;
    height: 10px;
    line-height: 10px;
    padding-right: 2px;
    background: #0a246a;
    color: #fff;
}
h3 {
    height: 12px;
    font-weight: normal;
    background: #e6e4df;
    border-radius: 0 5px 5px 0;
}
.toolbox {
    width: 43px;
    padding-right: 3px;
    border-right: 1px solid #fff;
}
.toolbox ul {
    display: grid;
    grid-auto-rows: 1fr;
}
.toolbox button {
    width: 100%;
    height: 100%;
    padding-left: 3px;
    text-align: left;
}
.toolbox .picked {
    background: #fff;
}
.few {
    height: 33px;
}
.design {
    height: 212px;
}
.document {
    height: 229px;
}
.work {
    flex: 1;
    min-width: 0;
    display: flex;
    flex-direction: column;
}
.infobox {
    display: flex;
    align-items: center;
    height: 35px;
}
.infobox button {
    width: 14px;
    height: 12px;
    margin-left: 1px;
    border-bottom: 1px solid #808080;
    font-weight: bold;
}
.grip {
    display: flex;
    flex-direction: column;
    align-items: center;
    justify-content: space-between;
    width: 10px;
    height: 35px;
    padding-bottom: 2px;
    background: #0a246a;
    color: #fff;
}
.grip b {
    writing-mode: vertical-rl;
    transform: rotate(180deg);
    line-height: 10px;
}
.split {
    flex: 1;
    display: flex;
}
.document-window {
    flex: 1;
    min-width: 0;
    display: flex;
    flex-direction: column;
    border-top: 2px solid #6a6a62;
    border-left: 1px solid #6a6a62;
}
.view {
    flex: 1;
    display: flex;
}
.canvas {
    position: relative;
    flex: 1;
    background: #fff;
}
.drawing {
    position: absolute;
    width: 100%;
    height: 100%;
}
.drawing text {
    font-size: 7px;
    fill: #888;
}
.brand {
    position: absolute;
    right: 11px;
    bottom: 8px;
    font-size: 11px;
    line-height: 16px;
    color: #6b6b74;
}

/* scroll bars */
.track {
    flex: 1;
    background: #eae8e4;
}
.thumb, .up, .down, .left, .right, .zoombar button, .maps button, .actions button, .settings, .tasks button, .start {
    background: #d4d0c8;
    border: 1px solid;
    border-color: #fff #606060 #606060 #fff;
}
.vscroll {
    display: flex;
    flex-direction: column;
    width: 12px;
}
.vscroll .track {
    display: grid;
    grid-template-rows: 282fr 51px 232fr;
}
.vscroll .thumb {
    grid-row: 2;
}
.up, .down, .left, .right {
    display: flex;
    align-items: center;
    justify-content: center;
    width: 12px;
    height: 11px;
}
.up::before, .down::before, .left::before, .right::before {
    content: "";
    border: 3px solid transparent;
}
.up::before {
    border-bottom-color: #000;
    border-top: none;
}
.down::before {
    border-top-color: #000;
    border-bottom: none;
}
.left::before {
    border-right-color: #000;
    border-left: none;
}
.right::before {
    border-left-color: #000;
    border-right: none;
}
.zoombar {
    display: flex;
    height: 12px;
    margin-bottom: 2px;
}
.zoombar button {
    display: flex;
    align-items: center;
    justify-content: center;
    width: 16px;
    height: 12px;
}
.zoombar svg {
    height: 10px;
}
.zoombar .scale {
    width: 44px;
}
.zoombar .percent {
    width: 51px;
}
.zoombar .left, .zoombar .track + .right {
    width: 10px;
}
.zoombar .track {
    display: grid;
    grid-template-columns: 268fr 58px 337fr;
}
.zoombar .thumb {
    grid-column: 2;
}
.corner {
    width: 12px;
}

/* navigator */
.navigator {
    width: 115px;
    padding: 2px 0 0 3px;
    overflow: hidden;
    border-left: 1px solid #808080;
}
.navigator h2 {
    padding-left: 1px;
}
.maps {
    display: grid;
    grid-template-columns: 23px repeat(4, 1fr);
    height: 20px;
    padding: 1px 1px 1px 0;
}
.maps button, .actions button {
    display: flex;
    align-items: center;
    justify-content: center;
}
.maps i {
    align-self: flex-end;
    margin: 0 0 3px 2px;
    border: 2px solid transparent;
    border-left: 3px solid #000;
    border-right: none;
}
.tree {
    height: 463px;
    padding-left: 4px;
    overflow: hidden;
    background: #fff;
    border: 1px solid #808080;
    border-width: 1px 0 0 1px;
}
.tree li {
    position: relative;
    line-height: 11px;
    padding-left: 12px;
}
.tree li::before {
    content: "";
    position: absolute;
    top: 0;
    left: 4px;
    height: 100%;
    border-left: 1px dotted #999;
}
.tree li:last-child::before {
    height: 6px;
}
.tree li::after {
    content: "";
    position: absolute;
    top: 5px;
    left: 4px;
    width: 8px;
    border-top: 1px dotted #999;
}
.tree li > svg {
    height: 11px;
    margin-right: 1px;
    vertical-align: top;
}
.tree li ul {
    padding-left: 1px;
}
.tree strong {
    display: inline-block;
    height: 11px;
    line-height: 9px;
    border: 1px solid #0a246a;
}
.minus, .plus {
    position: absolute;
    z-index: 1;
    top: 2px;
    left: 1px;
    width: 7px;
    height: 7px;
    border: 1px solid #888;
    background: linear-gradient(#000, #000) center / 3px 1px no-repeat #fff;
}
.plus {
    background: linear-gradient(#000, #000) center / 3px 1px no-repeat, linear-gradient(#000, #000) center / 1px 3px no-repeat #fff;
}
.hscroll {
    display: flex;
    height: 12px;
    padding-right: 1px;
}
.hscroll button {
    height: 12px;
}
.hscroll .thumb {
    width: 90%;
    height: 12px;
}
.actions {
    display: flex;
    justify-content: flex-end;
    padding: 5px 1px 4px;
}
.actions button {
    width: 16px;
    height: 16px;
}
.navigator h3 {
    display: flex;
    align-items: center;
    gap: 6px;
    margin-bottom: 4px;
    padding-left: 8px;
    border-radius: 6px;
}
.navigator h3::before {
    content: "";
    border: 3px solid transparent;
    border-top: 4px solid #000;
    border-bottom: none;
}
.props {
    display: flex;
    align-items: center;
    gap: 2px;
    height: 12px;
}
.props svg {
    width: 7px;
    height: 9px;
}
.props input {
    height: 12px;
    padding: 0 1px;
    border: 1px solid;
    border-color: #808080 #fff #fff #808080;
}
.id {
    width: 22px;
    background: #d4d0c8;
}
.name {
    flex: 1;
    min-width: 0;
    background: #fff;
}
.settings {
    width: 92px;
    height: 16px;
    margin: 2px 0 0 9px;
}

/* status bar and taskbar */
.status {
    display: flex;
    align-items: center;
    height: 16px;
    border-top: 1px solid #808080;
    border-bottom: 1px solid #808080;
}
.status span {
    display: flex;
    align-items: center;
    gap: 4px;
}
.disk {
    width: 68px;
    margin-left: auto;
}
.memory {
    width: 55px;
}
.status .slot {
    width: 11px;
    height: 13px;
    margin-right: 14px;
    border: 1px solid;
    border-color: #aaa #fff #fff transparent;
}
.taskbar {
    display: flex;
    align-items: center;
    height: 19px;
    border-top: 1px solid #fff;
}
.start {
    width: 15px;
    height: 16px;
    font-size: 9px;
    font-weight: bold;
}
.quick {
    display: flex;
    gap: 5px;
    width: 60px;
    padding-left: 5px;
}
.quick button {
    height: 12px;
}
.tasks {
    display: flex;
    gap: 2px;
    flex: 0 1 777px;
    min-width: 0;
}
.tasks button {
    flex: 1 1 0;
    min-width: 0;
    display: flex;
    align-items: center;
    gap: 2px;
    height: 16px;
    padding-left: 1px;
    overflow: hidden;
}
.tasks .current {
    background: #efedea;
    border-color: #404040 #fff #fff #404040;
    font-weight: bold;
}
.help {
    margin-left: auto;
    margin-right: 4px;
}
.tray {
    display: flex;
    align-items: center;
    gap: 5px;
    height: 16px;
    margin-right: 2px;
    padding: 0 4px;
    border: 1px solid;
    border-color: #808080 #fff #fff #808080;
}
.tray svg {
    width: 10px;
    height: 10px;
}
```
